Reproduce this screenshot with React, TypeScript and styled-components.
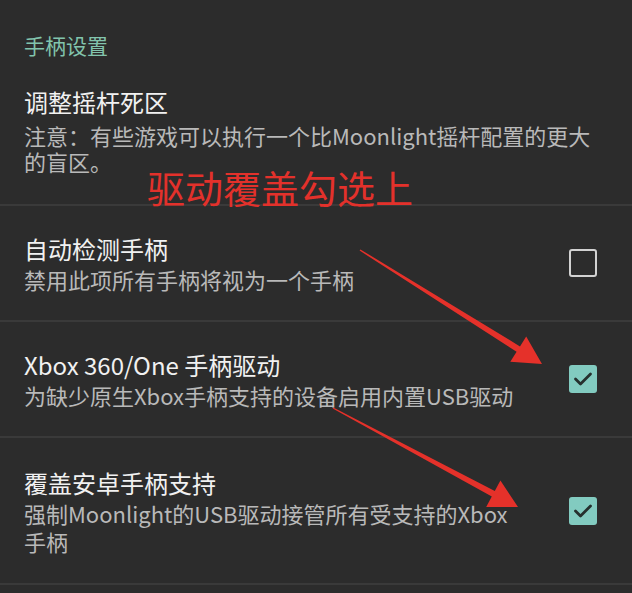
import React from "react";
import styled, { createGlobalStyle } from "styled-components";

const Global = createGlobalStyle`
  html, body {
    margin: 0;
    padding: 0;
    background: #2c2c2c;
  }
  body {
    font-family: "Noto Sans CJK SC", "Noto Sans", sans-serif;
    -webkit-font-smoothing: antialiased;
  }
`;

const Page = styled.div`
  position: relative;
  width: 632px;
  height: 593px;
  overflow: hidden;
  background: #2c2c2c;
`;

const SectionHeader = styled.div`
  padding: 33px 24px 0;
  height: 24px;
  line-height: 24px;
  font-size: 21px;
  color: #82c4ad;
`;

const Row = styled.div<{ $h: number; $pt?: number }>`
  box-sizing: border-box;
  display: flex;
  align-items: ${(p) => (p.$pt !== undefined ? "flex-start" : "center")};
  gap: 54px;
  height: ${(p) => p.$h}px;
  padding: ${(p) => (p.$pt !== undefined ? `${p.$pt}px` : "0")} 35px 0 24px;
  border-bottom: 2px solid #3a3a3a;
`;

const TextCol = styled.div`
  flex: 1;
  min-width: 0;
  display: flex;
  flex-direction: column;
`;

const Title = styled.div`
  font-size: 24px;
  line-height: 32px;
  color: #f1f1f1;
`;

const Desc = styled.div<{ $lh?: number; $mt?: number }>`
  font-size: 22px;
  line-height: ${(p) => p.$lh ?? 28}px;
  margin-top: ${(p) => p.$mt ?? 0}px;
  color: #b9b9b9;
`;

const Box = styled.div<{ $checked: boolean }>`
  flex: none;
  box-sizing: border-box;
  width: 28px;
  height: 28px;
  border-radius: 3px;
  display: flex;
  align-items: center;
  justify-content: center;
  background: ${(p) => (p.$checked ? "#82cbc0" : "transparent")};
  border: ${(p) => (p.$checked ? "none" : "2.8px solid #d2d2d2")};
`;

const Annotation = styled.div`
  position: absolute;
  left: 147px;
  top: 168px;
  font-size: 38px;
  line-height: 38px;
  color: #e3312b;
  white-space: nowrap;
`;

const ArrowLayer = styled.svg`
  position: absolute;
  left: 0;
  top: 0;
  pointer-events: none;
`;

function Checkbox({ checked }: { checked: boolean }) {
  return (
    <Box $checked={checked}>
      {checked && (
        <svg width="28" height="28" viewBox="0 0 28 28">
          <path
            d="M6.5 14 L11.5 19 L21.5 9"
            fill="none"
            stroke="#26302e"
            strokeWidth="2.8"
            strokeLinecap="round"
            strokeLinejoin="round"
          />
        </svg>
      )}
    </Box>
  );
}

type Pt = [number, number];

function arrowPoints(tail: Pt, tip: Pt, headLen: number, headHalf: number, w0: number, w1: number) {
  const dx = tip[0] - tail[0];
  const dy = tip[1] - tail[1];
  const len = Math.hypot(dx, dy);
  const ux = dx / len;
  const uy = dy / len;
  const nx = -uy;
  const ny = ux;
  const bx = tip[0] - headLen * ux;
  const by = tip[1] - headLen * uy;
  const pts: Pt[] = [
    [tail[0] + nx * w0, tail[1] + ny * w0],
    [bx + nx * w1, by + ny * w1],
    [bx + nx * headHalf, by + ny * headHalf],
    tip,
    [bx - nx * headHalf, by - ny * headHalf],
    [bx - nx * w1, by - ny * w1],
    [tail[0] - nx * w0, tail[1] - ny * w0],
  ];
  return pts.map((p) => `${p[0].toFixed(1)},${p[1].toFixed(1)}`).join(" ");
}

export default function App() {
  return (
    <>
      <Global />
      <Page>
        <SectionHeader>手柄设置</SectionHeader>
        <Row $h={149} $pt={29}>
          <TextCol>
            <Title>调整摇杆死区</Title>
            <Desc $lh={26} $mt={4}>
              注意：有些游戏可以执行一个比Moonlight摇杆配置的更大的盲区。
            </Desc>
          </TextCol>
        </Row>
        <Row $h={116}>
          <TextCol>
            <Title>自动检测手柄</Title>
            <Desc>禁用此项所有手柄将视为一个手柄</Desc>
          </TextCol>
          <Checkbox checked={false} />
        </Row>
        <Row $h={116}>
          <TextCol>
            <Title>Xbox 360/One 手柄驱动</Title>
            <Desc>为缺少原生Xbox手柄支持的设备启用内置USB驱动</Desc>
          </TextCol>
          <Checkbox checked />
        </Row>
        <Row $h={147}>
          <TextCol>
            <Title>覆盖安卓手柄支持</Title>
            <Desc>强制Moonlight的USB驱动接管所有受支持的Xbox手柄</Desc>
          </TextCol>
          <Checkbox checked />
        </Row>
        <Annotation>驱动覆盖勾选上</Annotation>
        <ArrowLayer width="632" height="593" viewBox="0 0 632 593">
          <polygon points={arrowPoints([360, 250], [542, 364], 28, 15, 0.7, 3.2)} fill="#e5312a" />
          <polygon points={arrowPoints([333, 408], [518, 507], 28, 15, 0.7, 3.2)} fill="#e5312a" />
        </ArrowLayer>
      </Page>
    </>
  );
}
